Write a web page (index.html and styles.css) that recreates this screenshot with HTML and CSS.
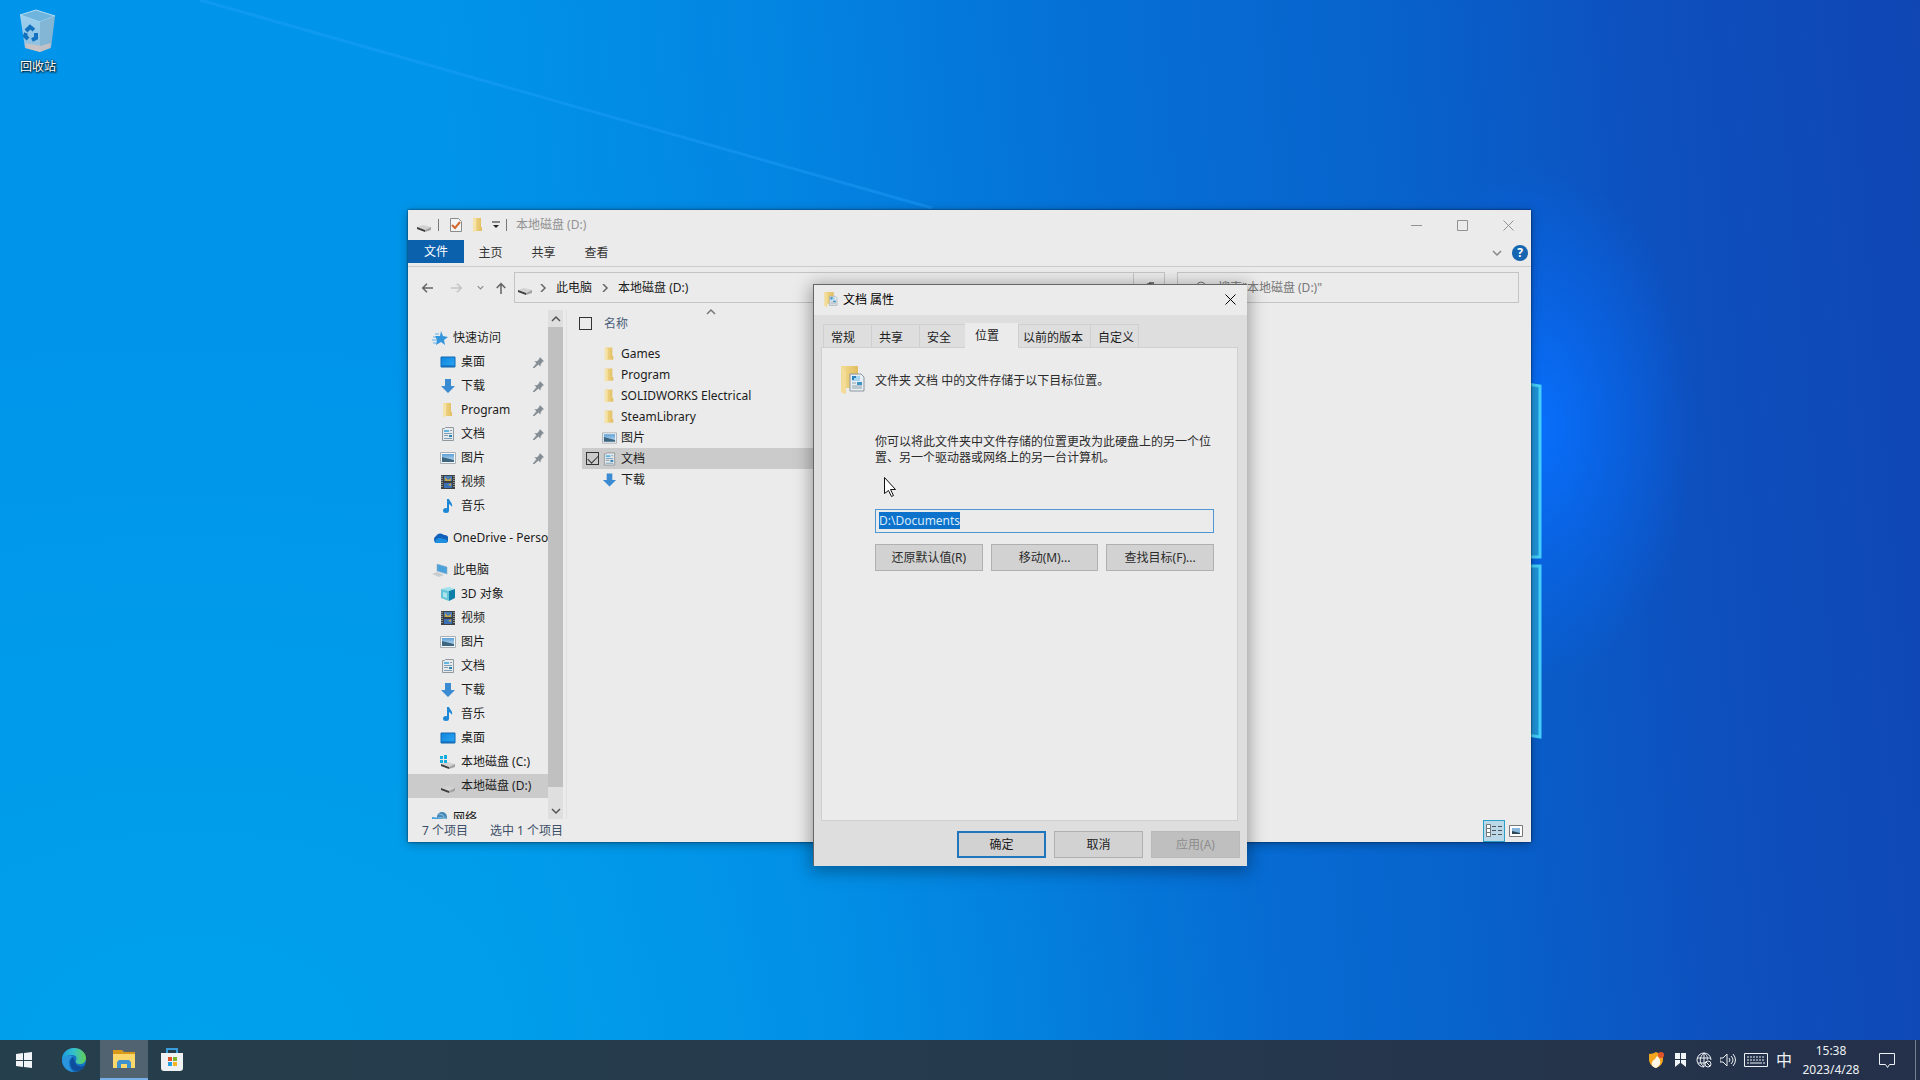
FILE: index.html
```html
<!DOCTYPE html>
<html lang="zh-CN">
<head>
    <meta charset="UTF-8">
    <meta name="viewport" content="width=device-width, initial-scale=1.0">
    <title>文档 属性</title>
    <link rel="stylesheet" href="styles.css">
</head>

<body>
    <!-- icon set -->
    <svg class="sprite" aria-hidden="true">
        <defs>
            <linearGradient id="g-folder" x1="0" x2="1"><stop offset="0" stop-color="#f3dc93"/><stop offset="1" stop-color="#e2bd60"/></linearGradient>
            <linearGradient id="g-screen" x1="0" y1="0" x2="1" y2="1"><stop offset="0" stop-color="#0f86dc"/><stop offset="1" stop-color="#2ba6f7"/></linearGradient>
            <linearGradient id="g-edge" x1="0" y1="0" x2="1" y2="0"><stop offset="0" stop-color="#1b9de2"/><stop offset=".5" stop-color="#35c1c9"/><stop offset="1" stop-color="#63cf52"/></linearGradient>
            <linearGradient id="g-bin" x1="0" y1="0" x2="0" y2="1"><stop offset="0" stop-color="#9fd0ee"/><stop offset=".75" stop-color="#8fc2e3"/><stop offset="1" stop-color="#c9c3c6"/></linearGradient>
            <linearGradient id="g-pic" x1="0" y1="0" x2="0" y2="1"><stop offset="0" stop-color="#5b9fd6"/><stop offset="1" stop-color="#cfe5f2"/></linearGradient>
        </defs>
        <symbol id="i-drive" viewBox="0 0 16 16"><path d="M1 10l6-2 8 2-6 3z" fill="#d2d2d2"/><path d="M1 10l8 3v2l-8-3z" fill="#3c3c3c"/><path d="M9 13l6-3v3l-6 2z" fill="#a3a3a3"/></symbol>
        <symbol id="i-drive-c" viewBox="0 0 16 16"><path d="M1 10l6-2 8 2-6 3z" fill="#d2d2d2"/><path d="M1 10l8 3v2l-8-3z" fill="#3c3c3c"/><path d="M9 13l6-3v3l-6 2z" fill="#a3a3a3"/><path d="M0 2h3v3H0zM4 1h3v4H4zM0 6h3v3H0zM4 6h3v3H4z" fill="#16aee0"/></symbol>
        <symbol id="i-folder" viewBox="0 0 16 16"><path d="M3 1h8v9h1v4H5l-2 1z" fill="url(#g-folder)"/><path d="M3 1l3 1v12l-3 1z" fill="#f5e3a9"/></symbol>
        <symbol id="i-star" viewBox="0 0 16 16"><path d="M9 1l2 5 5 1-4 3 1 5-4-3-5 3 1-5-2-4 5 0z" fill="#3696db"/><path d="M3 4h4M1 7h3M0 10h5M1 13h4" stroke="#62b2ec"/></symbol>
        <symbol id="i-desktop" viewBox="0 0 16 16"><path d="M1 3h14v10H1z" fill="url(#g-screen)" stroke="#0d69b5"/><path d="M2 12h12" stroke="#135c9c"/></symbol>
        <symbol id="i-down" viewBox="0 0 16 16"><path d="M5 1h6v7h4l-7 7-7-7h4z" fill="#3a8bd2"/></symbol>
        <symbol id="i-doc" viewBox="0 0 16 16"><path d="M2.500 2.500h2l1-1h8v13h-11z" fill="#e6eaed" stroke="#929a9f"/><path d="M4 4h5v2H4z" fill="#5fb4e2"/><path d="M10 4.500h2M4 7.500h8M4 9.500h4M4 12.500h8" stroke="#7f9fb4"/><path d="M9 9h3v2H9z" fill="#2f82b6"/></symbol>
        <symbol id="i-pic" viewBox="0 0 16 16"><path d="M.5 2.500h15v11H.5z" fill="#f3f5f6" stroke="#a9b0b5"/><path d="M2 4h12v8H2z" fill="url(#g-pic)"/><path d="M2 7l4 1 4 1 4 1v2H2z" fill="#3d6680"/></symbol>
        <symbol id="i-video" viewBox="0 0 16 16"><path d="M1 1h14v14H1z" fill="#3e4143"/><path d="M4 2h8v5H4z" fill="#4a7db8"/><path d="M4 9h8v5H4z" fill="#3b70b4"/><path d="M5 3l3 3 3-2v3H5zM8 11l3-2v3z" fill="#c4a548"/><path d="M2 2v12M14 2v12" stroke="#dcdcdc" stroke-dasharray="1 1"/></symbol>
        <symbol id="i-music" viewBox="0 0 16 16"><ellipse cx="6" cy="12.500" rx="3" ry="2.500" fill="#1f88d6"/><path d="M7 12V1h2c1 3 4 4 3 8-1-2-2-2-3-3v7z" fill="#1f88d6"/></symbol>
        <symbol id="i-cloud" viewBox="0 0 16 16"><path d="M4 13a4 4 0 0 1 0-7 5 5 0 0 1 8-1 4 4 0 0 1 1 8z" fill="#0f62b8"/><path d="M3 13c0-3 2-5 5-5 3 1 5 1 7 2 1 1 0 3-2 3z" fill="#1d8fe1"/></symbol>
        <symbol id="i-pc" viewBox="0 0 16 16"><path d="M5 2l10 3v7L5 9z" fill="#4aa2dc" stroke="#8db0c8" stroke-width=".6"/><path d="M0 12l5-2 7 3-5 2z" fill="#c9cdd0"/></symbol>
        <symbol id="i-cube" viewBox="0 0 16 16"><path d="M1 3l8-2 6 2-6 2z" fill="#9fe2ec"/><path d="M1 3l8 2v10l-8-3z" fill="#66c4d8"/><path d="M9 5l6-2v9l-6 3z" fill="#0e7fa9"/><path d="M3 6l4 1v5l-4-1z" fill="#a8e4ec"/></symbol>
        <symbol id="i-net" viewBox="0 0 16 16"><circle cx="10" cy="7" r="5" fill="#4388b8"/><path d="M7 4c2 1 4 0 5 3M6 8c3-1 5 1 8 0" stroke="#a9d3e8" fill="none"/><path d="M0 7l9 1v6l-9-2z" fill="#4aa2dc"/></symbol>
        <symbol id="i-pin" viewBox="0 0 16 16"><path d="M10 0l6 6-2 1-3 4v3l-3-3-6 5-2 0 0-1 5-6-3-3h4l3-3z" fill="#858e94"/></symbol>
        <symbol id="i-check-doc" viewBox="0 0 16 16"><path d="M2.500 1.500h8l3 3v10h-11z" fill="#f4f4f4" stroke="#8b8b8b"/><path d="M4 8l3 3 5-6" fill="none" stroke="#d4682c" stroke-width="2"/></symbol>
        <symbol id="i-folder-doc" viewBox="0 0 28 28"><path d="M3 0h17v22H8l-1 6-4-2z" fill="url(#g-folder)"/><path d="M3 0l5 4v24l-5-3z" fill="#f3dc97"/><path d="M12 8h11l3 3v14H12z" fill="#e8eef1" stroke="#8b979e"/><path d="M14 10h8v5h-8z" fill="#a5d5f0"/><path d="M15 14v-3h3" stroke="#2983ba" stroke-width="2" fill="none"/><path d="M19 16h5v3h-5z" fill="#3e93c4"/><path d="M14 17h4M14 20h10M14 22h10" stroke="#8ea1ad"/></symbol>
        <symbol id="i-chev-r" viewBox="0 0 8 8"><path d="M2 0l4 4-4 4" fill="none" stroke="#666" stroke-width="1.500"/></symbol>
        <symbol id="i-chev-d" viewBox="0 0 10 10"><path d="M1 3l4 4 4-4" fill="none" stroke="currentColor" stroke-width="1.500"/></symbol>
        <symbol id="i-chev-u" viewBox="0 0 10 10"><path d="M1 7l4-4 4 4" fill="none" stroke="currentColor" stroke-width="1.500"/></symbol>
        <symbol id="i-close" viewBox="0 0 11 11"><path d="M.5.5l10 10m0-10l-10 10" fill="none" stroke="currentColor"/></symbol>
        <symbol id="i-arrow" viewBox="0 0 14 14"><path d="M14 7H2m5-5L2 7l5 5" fill="none" stroke="currentColor" stroke-width="1.800"/></symbol>
    </svg>

    <main class="desktop">
        <svg class="wallpaper" viewBox="0 0 1920 1040" preserveAspectRatio="none" aria-hidden="true">
            <path d="M200 0L932 208" stroke="#28a4ff" stroke-width="3" opacity=".35"/>
            <g fill="#1f93d8" stroke="#45d0fa" stroke-width="3">
                <path d="M1380 362l160 24v171h-160z"/>
                <path d="M1380 566h160v171l-160-24z"/>
            </g>
        </svg>

        <a class="shortcut" href="#">
            <svg viewBox="0 0 40 46" width="40" height="46">
                <path d="M2 7L18 2l19 6-15 6z" fill="#6fb4dd" stroke="#b4dcf1"/>
                <path d="M2 7l20 7v30L7 40z" fill="url(#g-bin)"/>
                <path d="M22 14l15-6-4 32-11 4z" fill="#83b5d4"/>
                <path d="M7 35l15 3 11-3-1 5-10 4-14-4z" fill="#cfc3c2" opacity=".8"/>
                <g fill="none" stroke="#1372bf" stroke-width="4"><path d="M8 23l4-4 4 3M18 25l0 5-4 2M10 31l-3-3 1-3"/></g>
            </svg>
            <span>回收站</span>
        </a>

        <section class="window explorer">
            <header class="titlebar">
                <svg class="icon"><use href="#i-drive"/></svg>
                <i class="sep"></i>
                <svg class="icon"><use href="#i-check-doc"/></svg>
                <svg class="icon"><use href="#i-folder"/></svg>
                <svg class="qat-more" viewBox="0 0 8 8"><path d="M0 1h8" stroke="#222"/><path d="M1 4h6L4 7z" fill="#222"/></svg>
                <i class="sep"></i>
                <h1>本地磁盘 (D:)</h1>
                <div class="controls">
                    <button type="button" aria-label="最小化"><svg viewBox="0 0 11 11"><path d="M0 5.500h11" stroke="currentColor"/></svg></button>
                    <button type="button" aria-label="最大化"><svg viewBox="0 0 11 11"><path d="M.5.5h10v10H.5z" fill="none" stroke="currentColor"/></svg></button>
                    <button type="button" aria-label="关闭"><svg><use href="#i-close"/></svg></button>
                </div>
            </header>

            <nav class="ribbon">
                <button type="button" class="file">文件</button>
                <button type="button">主页</button>
                <button type="button">共享</button>
                <button type="button">查看</button>
                <button type="button" class="expand" aria-label="展开功能区"><svg><use href="#i-chev-d"/></svg></button>
                <button type="button" class="help" aria-label="帮助">?</button>
            </nav>

            <div class="toolbar">
                <button type="button" class="go" aria-label="后退"><svg><use href="#i-arrow"/></svg></button>
                <button type="button" class="go off" aria-label="前进"><svg class="flip"><use href="#i-arrow"/></svg></button>
                <button type="button" class="recent" aria-label="最近"><svg><use href="#i-chev-d"/></svg></button>
                <button type="button" class="go up" aria-label="上移"><svg class="turn"><use href="#i-arrow"/></svg></button>
                <div class="address">
                    <svg class="icon"><use href="#i-drive"/></svg>
                    <svg class="crumb"><use href="#i-chev-r"/></svg>
                    <a href="#">此电脑</a>
                    <svg class="crumb"><use href="#i-chev-r"/></svg>
                    <a href="#">本地磁盘 (D:)</a>
                    <button type="button" class="refresh" aria-label="刷新"><svg viewBox="0 0 14 14"><path d="M12 7a5 5 0 1 1-2-4M7 1h5v5" fill="none" stroke="#555" stroke-width="1.500"/></svg></button>
                </div>
                <div class="search">
                    <svg viewBox="0 0 14 14"><path d="M13 5a4 4 0 1 1-8 0 4 4 0 0 1 8 0zM6 8l-5 5" fill="none" stroke="#777"/></svg>
                    <input type="search" aria-label="搜索" placeholder="搜索&quot;本地磁盘 (D:)&quot;">
                </div>
            </div>

            <div class="panes">
                <aside class="tree">
                    <div class="tree-list">
                        <ul>
                            <li class="root"><svg class="icon"><use href="#i-star"/></svg><a href="#">快速访问</a></li>
                            <li><svg class="icon"><use href="#i-desktop"/></svg><a href="#">桌面</a><svg class="pin"><use href="#i-pin"/></svg></li>
                            <li><svg class="icon"><use href="#i-down"/></svg><a href="#">下载</a><svg class="pin"><use href="#i-pin"/></svg></li>
                            <li><svg class="icon"><use href="#i-folder"/></svg><a href="#">Program</a><svg class="pin"><use href="#i-pin"/></svg></li>
                            <li><svg class="icon"><use href="#i-doc"/></svg><a href="#">文档</a><svg class="pin"><use href="#i-pin"/></svg></li>
                            <li><svg class="icon"><use href="#i-pic"/></svg><a href="#">图片</a><svg class="pin"><use href="#i-pin"/></svg></li>
                            <li><svg class="icon"><use href="#i-video"/></svg><a href="#">视频</a></li>
                            <li><svg class="icon"><use href="#i-music"/></svg><a href="#">音乐</a></li>
                        </ul>
                        <ul>
                            <li class="root"><svg class="icon"><use href="#i-cloud"/></svg><a href="#">OneDrive - Personal</a></li>
                        </ul>
                        <ul>
                            <li class="root"><svg class="icon"><use href="#i-pc"/></svg><a href="#">此电脑</a></li>
                            <li><svg class="icon"><use href="#i-cube"/></svg><a href="#">3D 对象</a></li>
                            <li><svg class="icon"><use href="#i-video"/></svg><a href="#">视频</a></li>
                            <li><svg class="icon"><use href="#i-pic"/></svg><a href="#">图片</a></li>
                            <li><svg class="icon"><use href="#i-doc"/></svg><a href="#">文档</a></li>
                            <li><svg class="icon"><use href="#i-down"/></svg><a href="#">下载</a></li>
                            <li><svg class="icon"><use href="#i-music"/></svg><a href="#">音乐</a></li>
                            <li><svg class="icon"><use href="#i-desktop"/></svg><a href="#">桌面</a></li>
                            <li><svg class="icon"><use href="#i-drive-c"/></svg><a href="#">本地磁盘 (C:)</a></li>
                            <li class="current"><svg class="icon"><use href="#i-drive"/></svg><a href="#">本地磁盘 (D:)</a></li>
                        </ul>
                        <ul>
                            <li class="root"><svg class="icon"><use href="#i-net"/></svg><a href="#">网络</a></li>
                        </ul>
                    </div>
                    <div class="scrollbar">
                        <button type="button" aria-label="向上滚动"><svg><use href="#i-chev-u"/></svg></button>
                        <div class="thumb"></div>
                        <button type="button" aria-label="向下滚动"><svg><use href="#i-chev-d"/></svg></button>
                    </div>
                </aside>

                <div class="files">
                    <table>
                        <thead>
                            <tr>
                                <th class="pick"><input type="checkbox" aria-label="全选"></th>
                                <th class="name">名称<svg class="sort"><use href="#i-chev-u"/></svg></th>
                            </tr>
                        </thead>
                        <tbody>
                            <tr><td></td><td class="name"><svg class="icon"><use href="#i-folder"/></svg>Games</td></tr>
                            <tr><td></td><td class="name"><svg class="icon"><use href="#i-folder"/></svg>Program</td></tr>
                            <tr><td></td><td class="name"><svg class="icon"><use href="#i-folder"/></svg>SOLIDWORKS Electrical</td></tr>
                            <tr><td></td><td class="name"><svg class="icon"><use href="#i-folder"/></svg>SteamLibrary</td></tr>
                            <tr><td></td><td class="name"><svg class="icon"><use href="#i-pic"/></svg>图片</td></tr>
                            <tr class="selected"><td class="pick"><input type="checkbox" aria-label="文档" checked></td><td class="name"><svg class="icon"><use href="#i-doc"/></svg>文档</td></tr>
                            <tr><td></td><td class="name"><svg class="icon"><use href="#i-down"/></svg>下载</td></tr>
                        </tbody>
                    </table>
                </div>
            </div>

            <footer class="status">
                <span>7 个项目</span>
                <span>选中 1 个项目</span>
                <button type="button" class="view on" aria-label="详细信息"><svg viewBox="0 0 16 14"><path d="M.5.5h4v12h-4zM1 4.500h4M1 8.500h4" fill="#fff" stroke="#777"/><path d="M6 2.500h4m2 0h4M6 6.500h4m2 0h4M6 10.500h4m2 0h4" stroke="#555"/></svg></button>
                <button type="button" class="view" aria-label="大图标"><svg viewBox="0 0 16 14"><path d="M1.500 1.500h13v11h-13z" fill="#fff" stroke="#777"/><path d="M4 4h8v6H4z" fill="#89b6dc"/><path d="M4 7l8 2v1H4z" fill="#2c4654"/></svg></button>
            </footer>
        </section>

        <section class="window dialog" role="dialog" aria-labelledby="dialog-title">
            <header class="dialog-title">
                <svg class="icon"><use href="#i-folder-doc"/></svg>
                <h2 id="dialog-title">文档 属性</h2>
                <button type="button" aria-label="关闭"><svg><use href="#i-close"/></svg></button>
            </header>
            <div class="dialog-body">
                <div class="tabs" role="tablist">
                    <button type="button" role="tab">常规</button>
                    <button type="button" role="tab">共享</button>
                    <button type="button" role="tab">安全</button>
                    <button type="button" role="tab" class="active" aria-selected="true">位置</button>
                    <button type="button" role="tab">以前的版本</button>
                    <button type="button" role="tab">自定义</button>
                </div>
                <div class="page">
                    <svg class="big-icon"><use href="#i-folder-doc"/></svg>
                    <div class="page-text">
                        <p class="lead">文件夹 文档 中的文件存储于以下目标位置。</p>
                        <p class="note"><label for="path">你可以将此文件夹中文件存储的位置更改为此硬盘上的另一个位置、另一个驱动器或网络上的另一台计算机。</label></p>
                        <input type="text" id="path" value="D:\Documents" spellcheck="false">
                        <div class="path-actions">
                            <button type="button">还原默认值(R)</button>
                            <button type="button">移动(M)...</button>
                            <button type="button">查找目标(F)...</button>
                        </div>
                    </div>
                </div>
                <div class="dialog-actions">
                    <button type="button" class="default">确定</button>
                    <button type="button">取消</button>
                    <button type="button" disabled>应用(A)</button>
                </div>
            </div>
        </section>

        <svg class="cursor" viewBox="0 0 13 21" aria-hidden="true"><path d="M.5.5v16l4-3 3 6 2-1-3-6h5z" fill="#fff" stroke="#111"/></svg>
    </main>

    <footer class="taskbar">
        <button type="button" aria-label="开始"><svg viewBox="0 0 16 16" width="16" height="16"><path d="M0 2l7-1v7H0zM8 1l8-1v8H8zM0 9h7v6l-7-1zM8 9h8v7l-8-1z" fill="#f2f5f7"/></svg></button>
        <button type="button" aria-label="Microsoft Edge">
            <svg viewBox="0 0 24 24" width="24" height="24">
                <circle cx="12" cy="12" r="12" fill="#1672c4"/>
                <path d="M0 12C0 5 5 0 12 0s12 5 12 10c0 4-3 6-6 6-3 0-5-1-4-3 2-4-1-6-4-6-5 0-8 2-10 5z" fill="url(#g-edge)"/>
                <path d="M7 14c0-3 2-5 4-5-3-3-9-1-11 3 0 7 6 12 12 12-3-1-5-5-5-10z" fill="#2a95dc"/>
                <path d="M11 9c-5 4-3 13 3 14 4 0 7-2 9-6-4 3-9 1-10-3z" fill="#0d4d9c"/>
            </svg>
        </button>
        <button type="button" class="running" aria-label="文件资源管理器">
            <svg viewBox="0 0 24 20" width="24" height="20">
                <path d="M1 1h9l2 2h11v4H1z" fill="#d99a1c"/>
                <path d="M1 5h22v14H1z" fill="#fbd76c"/>
                <path d="M5 19v-6l2-2h10l2 2v6h-4v-4H9v4z" fill="#3f92cd"/>
            </svg>
        </button>
        <button type="button" aria-label="Microsoft Store">
            <svg viewBox="0 0 24 24" width="24" height="24">
                <path d="M7 6V1h10v5" fill="none" stroke="#3a9ddd" stroke-width="2"/>
                <path d="M1 5h22v15q0 3-3 3H4q-3 0-3-3z" fill="#eff1f2"/>
                <path d="M8 9h4v4H8z" fill="#e2512b"/><path d="M13 9h4v4h-4z" fill="#7cb52c"/>
                <path d="M8 14h4v4H8z" fill="#249fe0"/><path d="M13 14h4v4h-4z" fill="#f6b51e"/>
            </svg>
        </button>

        <div class="tray">
            <svg viewBox="0 0 16 16"><path d="M1 2q4 0 7-2 3 2 7 2v6q0 5-7 8-7-3-7-8z" fill="#f2a51d"/><path d="M8 16c-5-1-6-6-1-9l2-3c5 4 4 10-1 12z" fill="#fff6e8"/><circle cx="13" cy="3" r="3" fill="#e2542a"/></svg>
            <svg viewBox="0 0 16 16"><path d="M3 1h5v6H3zM9 1h5v6H9zM3 8h5v3l-5 4zM9 8h5v7l-5-4z" fill="#f2f5f7"/></svg>
            <svg viewBox="0 0 16 16" fill="none" stroke="#eef1f4"><path d="M8 15A7 7 0 1 1 15 8M8 1C3 5 3 11 8 15M8 1c3 2 4 5 3 7M1 6h14M2 11h7M8 1v14"/><circle cx="12" cy="12" r="3"/><path d="M10 10l4 4"/></svg>
            <svg viewBox="0 0 16 16" fill="none" stroke="#eef1f4"><path d="M0 6h3l4-4v12l-4-4H0zM9 6q2 2 0 4M11 4q4 4 0 8M13 2q5 6 0 12"/></svg>
            <svg class="keyboard" viewBox="0 0 24 14" fill="none" stroke="#eef1f4"><path d="M.5.5h23v13H.5z"/><path d="M3 4h18M3 7h18" stroke-dasharray="2 1"/><path d="M3 10h2m1 0h12m1 0h2"/></svg>
            <button type="button" class="ime">中</button>
            <button type="button" class="clock"><time datetime="2023-04-28T15:38">15:38<br>2023/4/28</time></button>
            <svg class="notice" viewBox="0 0 18 18" fill="none" stroke="#eef1f4"><path d="M1.500 2.500h15v11h-5l-2 3-2-3h-6z"/></svg>
            <i class="peek"></i>
        </div>
    </footer>

    <script>
        const path = document.getElementById('path');
        path.focus();
        path.select();
    </script>
</body>
</html>
```

FILE: styles.css
```css
* {
    margin: 0;
    padding: 0;
    box-sizing: border-box;
}

body {
    display: flex;
    flex-direction: column;
    height: 100vh;
    overflow: hidden;
    font: 12px/16px "Noto Sans", "Noto Sans CJK SC", sans-serif;
    color: #1c1c1c;
}

button,
input {
    font: inherit;
    color: inherit;
    border: none;
    background: none;
}

a {
    color: inherit;
    text-decoration: none;
}

ul {
    list-style: none;
}

svg {
    display: block;
    flex-shrink: 0;
}

h1,
h2,
th {
    font-size: 12px;
    font-weight: normal;
}

.sprite {
    position: absolute;
    width: 0;
    height: 0;
}

.icon {
    width: 16px;
    height: 16px;
}

/* desktop */

.desktop {
    position: relative;
    flex: 1;
    background:
        radial-gradient(ellipse 160px 260px at 80% 41%, rgba(8, 112, 255, 0.95), rgba(8, 108, 250, 0.5) 50%, rgba(8, 104, 245, 0)),
        radial-gradient(ellipse 1100px 700px at 10% 100%, rgba(0, 166, 236, 0.7), rgba(0, 160, 236, 0)),
        linear-gradient(85deg, #0095ea 0%, #0095ea 25%, #0386e3 42%, #0570d6 58%, #0862cc 74%, #0d50be 86%, #0f46b4 100%);
}

.wallpaper {
    width: 100%;
    height: 100%;
}

.shortcut {
    position: absolute;
    top: 8px;
    left: 0;
    width: 76px;
    display: flex;
    flex-direction: column;
    align-items: center;
    gap: 5px;
    color: #fff;
    text-shadow: 1px 1px 2px #000, 0 0 2px #000;
}

.window {
    position: absolute;
    display: flex;
    flex-direction: column;
    background: #ebebeb;
}

/* explorer */

.explorer {
    inset: 210px 389px 198px 408px;
    box-shadow: 0 0 2px rgba(0, 0, 0, 0.7), 0 2px 10px rgba(0, 0, 0, 0.3);
}

.titlebar {
    display: flex;
    align-items: center;
    height: 30px;
    padding-left: 8px;
    gap: 6px;
    color: #929292;
}

.titlebar .sep {
    width: 1px;
    height: 12px;
    margin-right: 3px;
    background: #777;
}

.qat-more {
    width: 8px;
    height: 8px;
}

.controls {
    display: flex;
    align-self: stretch;
    margin-left: auto;
}

.controls button {
    display: grid;
    place-items: center;
    width: 46px;
}

.controls svg,
.dialog-title button svg {
    width: 11px;
    height: 11px;
}

.ribbon {
    display: flex;
    height: 27px;
    padding-right: 3px;
    border-bottom: 1px solid #cbcbcb;
    color: #333;
}

.ribbon button {
    width: 53px;
    height: 26px;
}

.ribbon .file {
    width: 56px;
    height: 23px;
    background: #0c61ad;
    color: #fff;
}

.ribbon .expand {
    display: grid;
    place-items: center;
    width: 22px;
    margin-left: auto;
    color: #888;
}

.expand svg {
    width: 10px;
    height: 10px;
}

.ribbon .help {
    width: 16px;
    height: 16px;
    margin: 5px 0 0 4px;
    border-radius: 50%;
    background: #1565b0;
    color: #fff;
    font-weight: bold;
}

.toolbar {
    display: flex;
    padding: 5px 12px 7px 4px;
}

.toolbar button {
    display: grid;
    place-items: center;
}

.go {
    width: 30px;
    color: #666;
}

.go svg {
    width: 12px;
    height: 12px;
}

.go.off {
    color: #c4c4c4;
}

.go.up {
    width: 26px;
}

.flip {
    transform: rotate(180deg);
}

.turn {
    transform: rotate(90deg);
}

.recent {
    width: 16px;
    color: #888;
}

.recent svg {
    width: 7px;
    height: 7px;
}

.address {
    display: flex;
    align-items: center;
    flex: 1;
    height: 31px;
    padding-left: 2px;
    border: 1px solid #c4c4c4;
}

.crumb {
    width: 8px;
    height: 8px;
    margin: 0 9px 0 6px;
}

.address a + .crumb {
    margin: 0 9px;
}

.refresh {
    align-self: stretch;
    width: 31px;
    margin-left: auto;
    border-left: 1px solid #c4c4c4;
}

.refresh svg {
    width: 12px;
    height: 12px;
}

.search svg {
    width: 14px;
    height: 14px;
}

.search {
    display: flex;
    align-items: center;
    gap: 12px;
    width: 342px;
    margin-left: 12px;
    padding-left: 14px;
    border: 1px solid #c4c4c4;
}

.search input {
    flex: 1;
}

.search input::placeholder {
    color: #777;
}

.panes {
    display: flex;
    flex: 1;
    min-height: 0;
}

.tree {
    display: flex;
    width: 159px;
    border-right: 1px solid #e0e0e0;
}

.tree-list {
    width: 140px;
    padding-top: 16px;
    overflow: hidden;
}

.tree-list ul {
    margin-bottom: 8px;
}

.tree-list li {
    display: flex;
    align-items: center;
    gap: 5px;
    height: 24px;
    padding: 0 4px 0 32px;
    white-space: nowrap;
}

.tree-list .root {
    padding-left: 24px;
    padding-right: 0;
}

.tree-list .current {
    background: #cbcbcb;
}

.pin {
    width: 11px;
    height: 11px;
    margin-left: auto;
}

.scrollbar {
    display: flex;
    flex-direction: column;
    width: 15px;
    background: #dfdfdf;
    color: #555;
}

.scrollbar button {
    display: grid;
    place-items: center;
    height: 17px;
}

.scrollbar svg {
    width: 10px;
    height: 10px;
}

.thumb {
    flex: 1;
    margin-bottom: 15px;
    background: #c0c0c0;
}

.files {
    flex: 1;
    padding-left: 7px;
}

.files table {
    width: 244px;
    border-collapse: separate;
    border-spacing: 0;
    table-layout: fixed;
}

.files th {
    position: relative;
    height: 33px;
    padding: 6px 0 0 2px;
    text-align: left;
    vertical-align: top;
    color: #4c607a;
}

.files th:first-child {
    width: 28px;
    padding-left: 5px;
}

.files td {
    height: 21px;
}

.files td:first-child {
    border-left: 8px solid transparent;
    padding-left: 4px;
    background-clip: padding-box;
}

.files td .icon {
    float: left;
    width: 15px;
    margin-right: 4px;
}

.files .selected td {
    background-color: #cbcbcb;
}

.files input {
    display: grid;
    justify-items: center;
    appearance: none;
    width: 13px;
    height: 13px;
    padding-top: 2px;
    border: 1px solid #333;
}

.files th input {
    margin-top: 1px;
}

.files input:checked::before {
    content: "";
    width: 9px;
    height: 5px;
    border: solid #333;
    border-width: 0 0 1px 1px;
    transform: rotate(-45deg);
}

.sort {
    position: absolute;
    top: -3px;
    left: 48%;
    width: 10px;
    height: 10px;
    color: #777;
}

.status {
    display: flex;
    align-items: center;
    height: 23px;
    padding: 0 4px 0 14px;
    color: #3c4f68;
}

.status span + span {
    margin-left: 22px;
}

.view {
    display: grid;
    place-items: center;
    width: 22px;
    height: 22px;
}

.view svg {
    width: 16px;
    height: 14px;
}

.view.on {
    margin-left: auto;
    border: 1px solid #2a9fc7;
    background: #bbd8e8;
}

/* properties dialog */

.dialog {
    top: 284px;
    left: 813px;
    width: 434px;
    height: 582px;
    border-left: 1px solid #666;
    border-top: 1px solid #666;
    box-shadow: 0 3px 16px 2px rgba(0, 0, 0, 0.35);
}

.dialog-title {
    display: flex;
    align-items: center;
    height: 30px;
    padding: 0 11px 1px 9px;
    gap: 5px;
    color: #000;
}

.dialog-title .icon {
    width: 15px;
    height: 15px;
}

.dialog-title button {
    margin-left: auto;
}

.dialog-body {
    display: flex;
    flex-direction: column;
    flex: 1;
    padding: 8px 9px 8px 7px;
    background: #dedede;
}

.tabs {
    display: flex;
    align-items: flex-end;
    padding-left: 2px;
}

.tabs button {
    width: 48px;
    height: 23px;
    padding: 3px 0 0 7px;
    border: 1px solid #d0d0d0;
    border-bottom: none;
    border-right: none;
    text-align: left;
}

.tabs .active {
    z-index: 1;
    width: 53px;
    height: 25px;
    margin: 0 0 -1px -2px;
    padding: 0 0 1px 9px;
    border-color: #ebebeb;
    background: #ebebeb;
}

.tabs .active + button {
    width: 72px;
    padding-left: 4px;
}

.tabs button:last-child {
    width: 49px;
    border-right: 1px solid #d0d0d0;
}

.page {
    display: flex;
    flex: 1;
    padding: 18px 23px 0 16px;
    border: 1px solid #d0d0d0;
    background: #ebebeb;
}

.big-icon {
    width: 28px;
    height: 28px;
}

.page-text {
    flex: 1;
    margin-left: 9px;
    color: #2c2c2c;
}

.lead {
    margin: 7px 0 45px;
}

.note {
    margin-bottom: 43px;
}

.page input {
    width: 100%;
    height: 24px;
    padding: 0 3px 2px;
    border: 1px solid #4f97d2;
    outline: none;
}

.page input::selection {
    background: #0d72cc;
    color: #d6ebfb;
}

.path-actions {
    display: grid;
    grid-template-columns: repeat(3, 1fr);
    gap: 8px;
    margin-top: 11px;
}

.path-actions button,
.dialog-actions button {
    height: 27px;
    border: 1px solid #b0b0b0;
    background: #d2d2d2;
}

.dialog-actions {
    display: flex;
    justify-content: flex-end;
    gap: 8px;
    margin: 10px -2px 0 0;
}

.dialog-actions button {
    width: 89px;
}

.dialog-actions .default {
    border: 2px solid #2076bd;
}

.dialog-actions button:disabled {
    background: #bfbfbf;
    border-color: #b8b8b8;
    color: #8d8d8d;
}

.cursor {
    position: absolute;
    top: 477px;
    left: 884px;
    width: 13px;
    height: 21px;
}

/* taskbar */

.taskbar {
    display: flex;
    height: 40px;
    background: linear-gradient(90deg, #263f4c, #25394d 60%, #25304a);
    color: #eef1f4;
}

.taskbar > button {
    display: grid;
    place-items: center;
    width: 48px;
    margin-right: 2px;
}

.taskbar > .running {
    margin-right: 0;
    border-bottom: 2px solid #76aee6;
    background: #516270;
}

.tray {
    display: flex;
    align-items: center;
    margin-left: auto;
}

.tray svg {
    width: 16px;
    height: 16px;
    margin-right: 8px;
}

.tray .keyboard {
    width: 24px;
    height: 14px;
    margin-right: 4px;
}

.ime {
    width: 24px;
    font-size: 16px;
}

.clock {
    width: 70px;
    line-height: 19px;
}

.tray .notice {
    width: 18px;
    height: 18px;
    margin: 0 19px 0 12px;
}

.peek {
    align-self: stretch;
    width: 5px;
    border-left: 1px solid #75808e;
}
```
